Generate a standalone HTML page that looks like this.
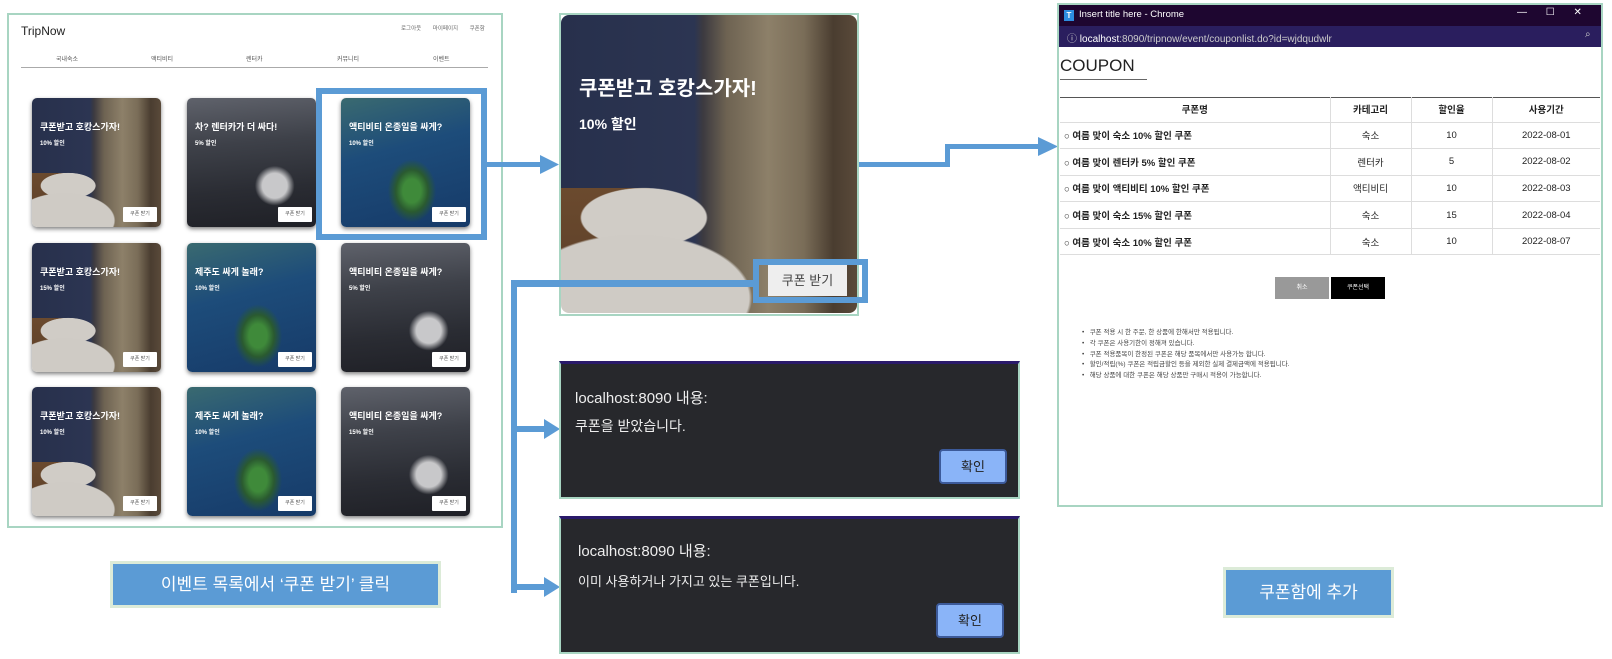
<!DOCTYPE html>
<html><head><meta charset="utf-8"><style>
*{margin:0;padding:0;box-sizing:border-box}
body{width:1612px;height:659px;background:#fff;position:relative;overflow:hidden;font-family:"Liberation Sans","Noto Sans CJK KR",sans-serif}
.a{position:absolute}
.panel{left:7px;top:13px;width:496px;height:515px;border:2px solid #a8d5c2}
.card{position:absolute;width:129px;height:129px;border-radius:5px;box-shadow:0 2px 4px rgba(0,0,0,.5);overflow:hidden}
.bed,.bigbed{background:
 radial-gradient(ellipse 55% 30% at 25% 95%,#cfcbc5 0 70%,transparent 72%),
 radial-gradient(ellipse 30% 14% at 28% 68%,#d0ccc6 0 70%,transparent 72%),
 linear-gradient(180deg,transparent 0 58%,#6b4a2e 58%,#5a3e28 100%) 0 0/30% 100% no-repeat,
 linear-gradient(90deg,#27304c 0%,#2c3552 45%,#3c3a40 48%,#6e6352 56%,#8d8069 70%,#7a6d58 82%,#4a3d30 92%,#5a4a3a 100%)}
.car{background:radial-gradient(ellipse at 68% 68%,#c8c8ca 0 10%,transparent 16%),linear-gradient(175deg,#5f626b 0%,#3e4149 35%,#2a2c33 70%,#1f2026 100%)}
.jeju{background:radial-gradient(ellipse at 55% 72%,#3f8a3a 0 9%,#2a5a30 16%,transparent 24%),linear-gradient(165deg,#3a6a70 0%,#1d4c7a 40%,#163a68 100%)}
.card .t{position:absolute;left:8px;top:22px;color:#fff;font-weight:bold;font-size:9px;white-space:nowrap}
.card .s{position:absolute;left:8px;top:40px;color:#fff;font-weight:bold;font-size:6px}
.card .b{position:absolute;right:4px;bottom:5px;width:34px;height:15px;background:#fff;font-size:5px;color:#555;text-align:center;line-height:15px;border-radius:1px}
.blue{background:#5b9bd5}
.dlg{position:absolute;left:559px;width:461px;background:#27282c;border:2px solid #a8d5c2;border-top:3px solid #2a1a6a;color:#eee}
.dlg .h{position:absolute;left:14px;font-size:15px}
.ok{position:absolute;width:68px;height:35px;background:#8ab4f8;border:2px solid #3c5a9a;border-radius:4px;color:#222;font-size:13px;text-align:center;line-height:31px}
table{border-collapse:collapse;position:absolute;left:1060px;top:97px;width:540px;font-size:9.5px;color:#222}
td{height:26.6px;border-bottom:1px solid #ddd;text-align:center}
th{height:25px;font-weight:bold;border-bottom:1px solid #ddd}
td+td,th+th{border-left:1px solid #ddd}
td:first-child{text-align:left;padding-left:4px;font-weight:bold}
.notes{left:1082px;top:328px;font-size:6.5px;color:#444;line-height:10.8px}
</style></head><body>

<div class="a panel"></div>
<div class="a" style="left:21px;top:24px;font-size:12px;color:#222">TripNow</div>
<div class="a" style="left:401px;top:24px;font-size:5.5px;color:#666;word-spacing:10px">로그아웃 마이페이지 쿠폰함</div>
<div class="a" style="left:56px;top:54px;font-size:6px;color:#555">국내숙소</div>
<div class="a" style="left:151px;top:54px;font-size:6px;color:#555">액티비티</div>
<div class="a" style="left:246px;top:54px;font-size:6px;color:#555">렌터카</div>
<div class="a" style="left:337px;top:54px;font-size:6px;color:#555">커뮤니티</div>
<div class="a" style="left:433px;top:54px;font-size:6px;color:#555">이벤트</div>
<div class="a" style="left:21px;top:67px;width:467px;height:1px;background:#aaa"></div>

<div class="card bed" style="left:32px;top:98px"><div class="t">쿠폰받고 호캉스가자!</div><div class="s">10% 할인</div><div class="b">쿠폰 받기</div></div>
<div class="card car" style="left:187px;top:98px"><div class="t">차? 렌터카가 더 싸다!</div><div class="s">5% 할인</div><div class="b">쿠폰 받기</div></div>
<div class="card jeju" style="left:341px;top:98px"><div class="t">액티비티 온종일을 싸게?</div><div class="s">10% 할인</div><div class="b">쿠폰 받기</div></div>
<div class="card bed" style="left:32px;top:243px"><div class="t">쿠폰받고 호캉스가자!</div><div class="s">15% 할인</div><div class="b">쿠폰 받기</div></div>
<div class="card jeju" style="left:187px;top:243px"><div class="t">제주도 싸게 놀래?</div><div class="s">10% 할인</div><div class="b">쿠폰 받기</div></div>
<div class="card car" style="left:341px;top:243px"><div class="t">액티비티 온종일을 싸게?</div><div class="s">5% 할인</div><div class="b">쿠폰 받기</div></div>
<div class="card bed" style="left:32px;top:387px"><div class="t">쿠폰받고 호캉스가자!</div><div class="s">10% 할인</div><div class="b">쿠폰 받기</div></div>
<div class="card jeju" style="left:187px;top:387px"><div class="t">제주도 싸게 놀래?</div><div class="s">10% 할인</div><div class="b">쿠폰 받기</div></div>
<div class="card car" style="left:341px;top:387px"><div class="t">액티비티 온종일을 싸게?</div><div class="s">15% 할인</div><div class="b">쿠폰 받기</div></div>
<div class="a" style="left:316px;top:88px;width:171px;height:152px;border:6px solid #5b9bd5"></div>

<!-- big card -->
<div class="a" style="left:559px;top:13px;width:300px;height:303px;border:2px solid #a8d5c2"></div>
<div class="a bigbed" style="left:561px;top:15px;width:296px;height:298px;border-radius:8px"></div>
<div class="a" style="left:579px;top:72px;color:#fff;font-weight:bold;font-size:20px">쿠폰받고 호캉스가자!</div>
<div class="a" style="left:579px;top:114px;color:#fff;font-weight:bold;font-size:14px">10% 할인</div>
<div class="a" style="left:768px;top:265px;width:79px;height:31px;background:#eee;color:#444;font-size:13px;text-align:center;line-height:31px">쿠폰 받기</div>
<div class="a" style="left:753px;top:259px;width:115px;height:44px;border:6px solid #5b9bd5"></div>

<svg class="a" style="left:0;top:0" width="1612" height="659">
<g fill="#5b9bd5">
<rect x="487" y="162" width="55" height="5"/><polygon points="540,155 559,164.5 540,174"/>
<rect x="859" y="162" width="91" height="5"/><rect x="945" y="144" width="5" height="23"/><rect x="945" y="144" width="95" height="5"/><polygon points="1038,137 1058,146.5 1038,156"/>
<rect x="511" y="280" width="245" height="7"/><rect x="511" y="280" width="6" height="313"/>
<rect x="511" y="426" width="35" height="6"/><polygon points="544,419 560,429 544,439"/>
<rect x="511" y="584" width="35" height="6"/><polygon points="544,577 560,587 544,597"/>
</g></svg>

<div class="dlg" style="top:361px;height:138px">
<div class="h" style="top:23px">localhost:8090 내용:</div>
<div class="h" style="top:52px;font-size:14px">쿠폰을 받았습니다.</div>
<div class="ok" style="left:378px;top:85px">확인</div>
</div>
<div class="dlg" style="top:516px;height:138px">
<div class="h" style="top:21px;left:17px">localhost:8090 내용:</div>
<div class="h" style="top:52px;left:17px;font-size:13px">이미 사용하거나 가지고 있는 쿠폰입니다.</div>
<div class="ok" style="left:375px;top:84px">확인</div>
</div>

<!-- coupon window -->
<div class="a" style="left:1057px;top:3px;width:546px;height:504px;border:2px solid #a8d5c2"></div>
<div class="a" style="left:1059px;top:5px;width:542px;height:21px;background:#1e0630"></div>
<div class="a" style="left:1064px;top:10px;width:10px;height:11px;background:#2d8de0;color:#fff;font-size:8px;text-align:center;line-height:11px;font-weight:bold">T</div>
<div class="a" style="left:1079px;top:9px;color:#fff;font-size:9.5px">Insert title here - Chrome</div>
<div class="a" style="left:1517px;top:7px;color:#fff;font-size:10px;word-spacing:16px">— ☐ ✕</div>
<div class="a" style="left:1059px;top:26px;width:542px;height:21px;background:#2a1e5e"></div>
<div class="a" style="left:1067px;top:30px;color:#ccc;font-size:10px">ⓘ <span style="color:#fff">localhost</span>:8090/tripnow/event/couponlist.do?id=wjdqudwlr</div>
<div class="a" style="left:1585px;top:29px;color:#ccc;font-size:10px">⌕</div>
<div class="a" style="left:1060px;top:56px;font-size:17px;color:#222">COUPON</div>
<div class="a" style="left:1060px;top:79px;width:87px;height:1px;background:#666"></div>
<div class="a" style="left:1060px;top:97px;width:540px;height:1px;background:#555"></div>
<table>
<tr><th style="width:270px">쿠폰명</th><th style="width:81px">카테고리</th><th style="width:81px">할인율</th><th>사용기간</th></tr>
<tr><td>○ 여름 맞이 숙소 10% 할인 쿠폰</td><td>숙소</td><td>10</td><td>2022-08-01</td></tr>
<tr><td>○ 여름 맞이 렌터카 5% 할인 쿠폰</td><td>렌터카</td><td>5</td><td>2022-08-02</td></tr>
<tr><td>○ 여름 맞이 액티비티 10% 할인 쿠폰</td><td>액티비티</td><td>10</td><td>2022-08-03</td></tr>
<tr><td>○ 여름 맞이 숙소 15% 할인 쿠폰</td><td>숙소</td><td>15</td><td>2022-08-04</td></tr>
<tr><td>○ 여름 맞이 숙소 10% 할인 쿠폰</td><td>숙소</td><td>10</td><td>2022-08-07</td></tr>
</table>
<div class="a" style="left:1275px;top:277px;width:54px;height:22px;background:#999;color:#fff;font-size:6px;text-align:center;line-height:22px">취소</div>
<div class="a" style="left:1331px;top:277px;width:54px;height:22px;background:#000;color:#fff;font-size:6px;text-align:center;line-height:22px">쿠폰선택</div>
<div class="a notes">
• &nbsp; 쿠폰 적용 시 한 주문, 한 상품에 한해서만 적용됩니다.<br>
• &nbsp; 각 쿠폰은 사용기한이 정해져 있습니다.<br>
• &nbsp; 쿠폰 적용품목이 한정된 쿠폰은 해당 품목에서만 사용가능 합니다.<br>
• &nbsp; 할인/적립(%) 쿠폰은 적립금할인 등을 제외한 실제 결제금액에 적용됩니다.<br>
• &nbsp; 해당 상품에 대한 쿠폰은 해당 상품만 구매시 적용이 가능합니다.
</div>

<div class="a blue" style="left:110px;top:561px;width:331px;height:47px;border:3px solid #dcebd8;color:#fff;font-size:17px;text-align:center;line-height:41px">이벤트 목록에서 ‘쿠폰 받기’ 클릭</div>
<div class="a blue" style="left:1223px;top:567px;width:171px;height:51px;border:3px solid #dcebd8;color:#fff;font-size:17px;text-align:center;line-height:45px">쿠폰함에 추가</div>
</body></html>
